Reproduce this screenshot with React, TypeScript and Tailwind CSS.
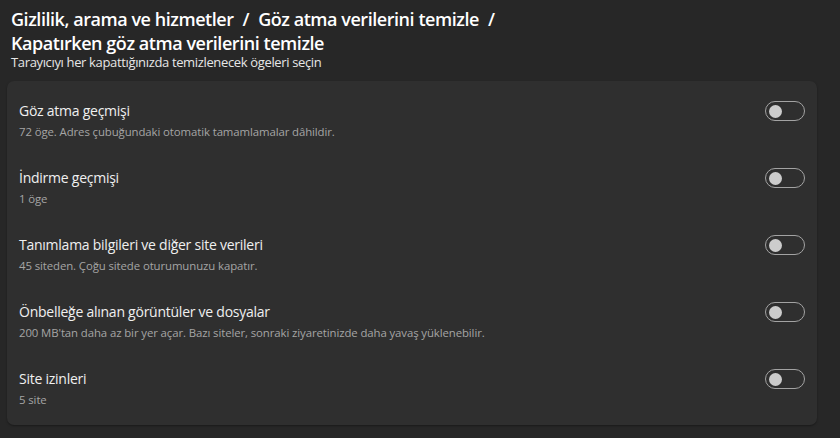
import React from "react";

const rows = [
  { t: "Göz atma geçmişi", s: "72 öge. Adres çubuğundaki otomatik tamamlamalar dâhildir." },
  { t: "İndirme geçmişi", s: "1 öge" },
  { t: "Tanımlama bilgileri ve diğer site verileri", s: "45 siteden. Çoğu sitede oturumunuzu kapatır." },
  { t: "Önbelleğe alınan görüntüler ve dosyalar", s: "200 MB'tan daha az bir yer açar. Bazı siteler, sonraki ziyaretinizde daha yavaş yüklenebilir." },
  { t: "Site izinleri", s: "5 site" },
];

function Toggle() {
  return (
    <div className="w-[40px] h-[20px] rounded-full border border-[#a3a3a3] flex items-center pl-[3px] shrink-0">
      <div className="w-[13px] h-[13px] rounded-full bg-[#cccccc]" />
    </div>
  );
}

export default function App() {
  return (
    <div
      className="w-[840px] h-[438px] bg-[#272727] text-white overflow-hidden"
      style={{ fontFamily: '"Open Sans", "Noto Sans", sans-serif' }}
    >
      <div className="pl-[11px] pt-[7px]">
        <h1 className="text-[18px] leading-[24px] font-semibold tracking-[-0.45px] max-w-[790px] flex flex-wrap gap-x-[9px]">
          <span>Gizlilik, arama ve hizmetler</span>
          <span>/</span>
          <span>Göz atma verilerini temizle</span>
          <span>/</span>
          <span>Kapatırken göz atma verilerini temizle</span>
        </h1>
        <p className="text-[13px] leading-[14px] mt-[0px] text-[#e6e6e6] tracking-[-0.35px]">
          Tarayıcıyı her kapattığınızda temizlenecek ögeleri seçin
        </p>
      </div>
      <div className="mx-[7px] mt-[12px] w-[810px] rounded-[7px] bg-[#2f2f2f] shadow-[0_1px_2px_rgba(0,0,0,0.35)] pt-[6px] pb-[3px]">
        {rows.map((r) => (
          <div key={r.t} className="flex items-start justify-between pl-[12px] pr-[12px] pt-[14px] pb-[14px]">
            <div className="flex flex-col gap-[3px]">
              <div className="text-[14px] leading-[20px] text-[#f0f0f0] tracking-[-0.25px]">{r.t}</div>
              <div className="text-[11.4px] leading-[16px] text-[#a5a5a5] tracking-[-0.1px]">{r.s}</div>
            </div>
            <div className="pt-[0px]">
              <Toggle />
            </div>
          </div>
        ))}
      </div>
    </div>
  );
}
